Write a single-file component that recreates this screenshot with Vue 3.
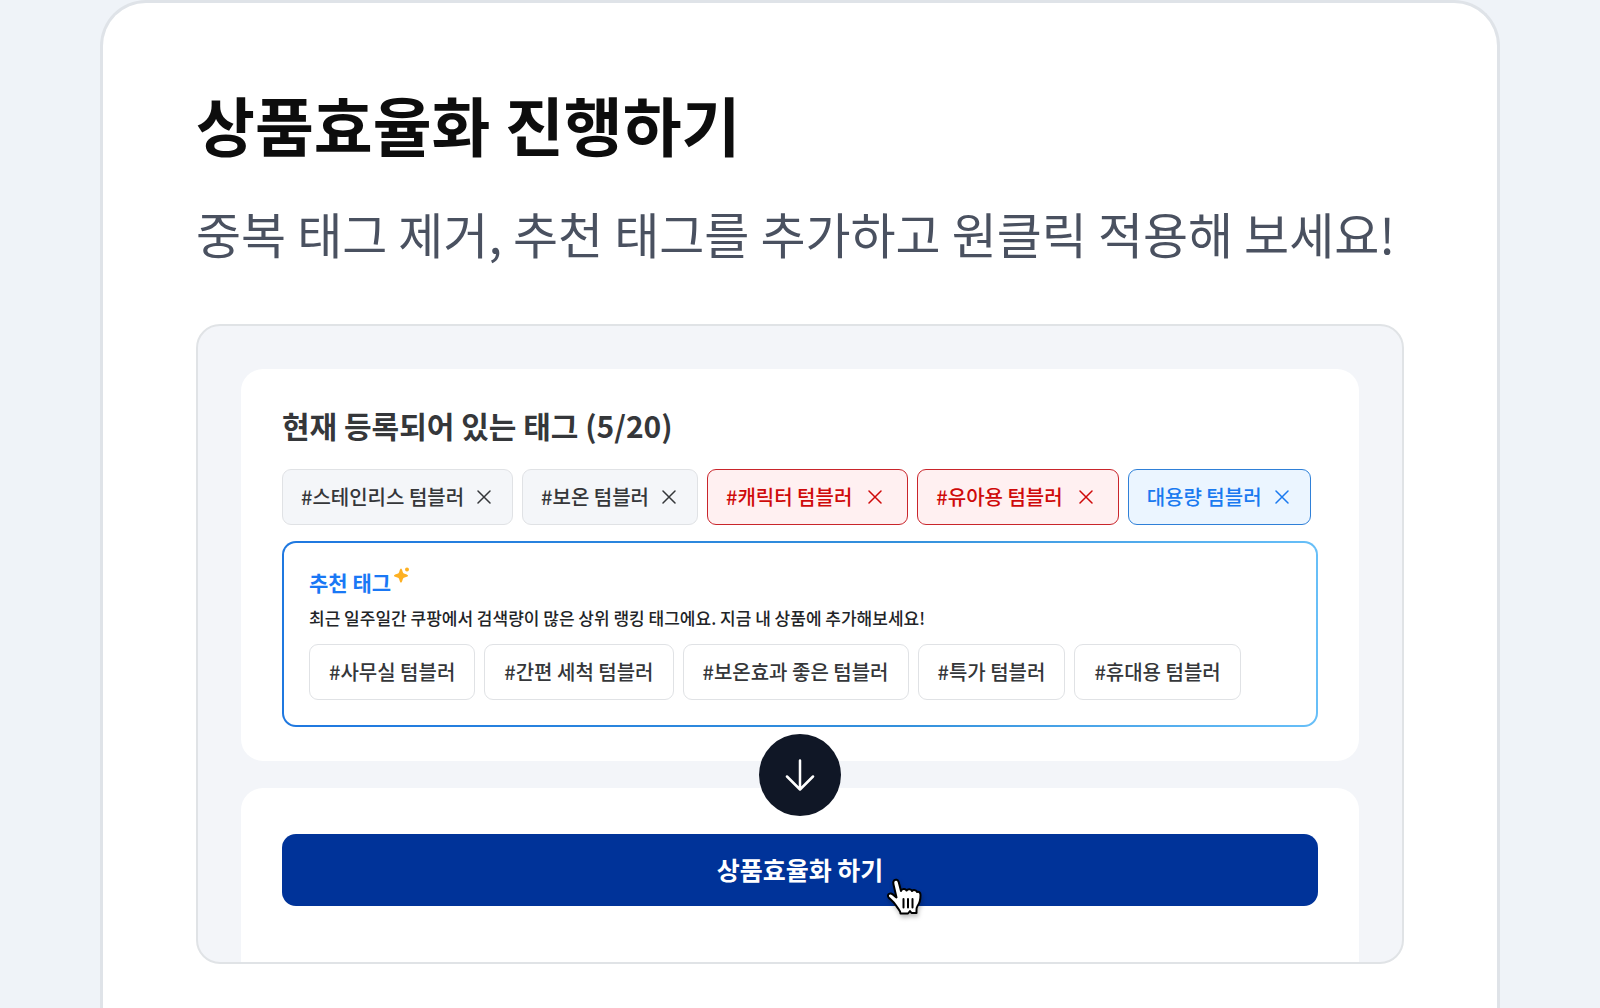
<template>
  <main class="page">
    <section class="sheet">
      <h1>상품효율화 진행하기</h1>
      <p class="lead">중복 태그 제거, 추천 태그를 추가하고 원클릭 적용해 보세요!</p>

      <div class="preview">
        <div class="panel tags-panel">
          <h2>현재 등록되어 있는 태그 (5/20)</h2>
          <ul class="tags">
            <li v-for="tag in tags" :key="tag.name" class="tag" :class="tag.type">
              <span>{{ tag.name }}</span>
              <button type="button" class="remove" :aria-label="`${tag.name} 삭제`" @click="removeTag(tag)">
                <svg viewBox="0 0 14 14" width="14" height="14">
                  <path d="M1 1L13 13M13 1L1 13" />
                </svg>
              </button>
            </li>
          </ul>

          <div class="recommend">
            <h3>
              추천 태그
              <svg class="sparkle" viewBox="0 0 16 16" width="16" height="16">
                <path d="M7 1.500C8.200 1.500 8.500 5.500 9.500 6.300C10.500 7.100 14 7.600 14 8.700C14 9.800 10.500 10.300 9.500 11.100C8.500 12 8.200 15.800 7 15.800C5.800 15.800 5.500 12 4.500 11.100C3.500 10.300 0 9.800 0 8.700C0 7.600 3.500 7.100 4.500 6.300C5.500 5.500 5.800 1.500 7 1.500Z" />
                <circle cx="13" cy="2.500" r="2" />
              </svg>
            </h3>
            <p>최근 일주일간 쿠팡에서 검색량이 많은 상위 랭킹 태그에요. 지금 내 상품에 추가해보세요!</p>
            <div class="tags">
              <button v-for="name in recommended" :key="name" type="button" class="tag plain">{{ name }}</button>
            </div>
          </div>

          <div class="arrow">
            <svg viewBox="0 0 32 32" width="32" height="32">
              <path d="M16 1.500V30M3 17.500L16 30.500L29 17.500" />
            </svg>
          </div>
        </div>

        <div class="panel action-panel">
          <button type="button" class="submit">
            <span class="submit-label">
              상품효율화 하기
              <svg class="cursor" viewBox="0 0 36 40" width="36" height="40">
                <path d="M8 3.500C9.500 2 12 2.500 12.700 5L15 14C16 11.500 19.500 11.500 20.500 13.500C22 11.700 25 12 26 14C27.500 12.500 30.500 13 31 15C33.500 14.300 34.500 16 34.500 18C34.500 24 33.500 26.500 31.500 29C30 31 30.500 33 30.500 36H25.500L24 34L22 36.500H14.500C14.500 33.500 12 32 10 28.500C8 25 5 23 2.500 20.500C1 18.500 2.500 16 5 16.500C7 17 8.500 19 10.500 20.500L7.500 7.500C7.100 5.800 7 4.500 8 3.500Z" />
                <path class="lines" d="M17.500 22V30.500M22 22V30.500M26.500 22V30.500" />
              </svg>
            </span>
          </button>
        </div>
      </div>
    </section>
  </main>
</template>

<script setup>
import { ref } from 'vue'

const tags = ref([
  { name: '#스테인리스 텀블러', type: 'normal' },
  { name: '#보온 텀블러', type: 'normal' },
  { name: '#캐릭터 텀블러', type: 'danger' },
  { name: '#유아용 텀블러', type: 'danger' },
  { name: '대용량 텀블러', type: 'info' }
])

const recommended = [
  '#사무실 텀블러',
  '#간편 세척 텀블러',
  '#보온효과 좋은 텀블러',
  '#특가 텀블러',
  '#휴대용 텀블러'
]

function removeTag(tag) {
  tags.value = tags.value.filter(t => t !== tag)
}
</script>

<style>
body {
  margin: 0;
  background: #eff3f8;
}
</style>

<style scoped>
* {
  box-sizing: border-box;
}

.page {
  padding: 0 100px;
  font-family: "Noto Sans CJK KR", sans-serif;
  color: #35373a;
}

h1, h2, h3, p, ul {
  margin: 0;
  padding: 0;
}

button {
  font: inherit;
  color: inherit;
  cursor: pointer;
}

.sheet {
  max-width: 1400px;
  min-height: 100vh;
  margin: 0 auto;
  padding: 72px 93px 44px;
  background: #fff;
  border: 3px solid #dfe3e8;
  border-bottom: 0;
  border-radius: 46px 46px 0 0;
}

h1 {
  font-size: 64px;
  line-height: 96px;
  font-weight: 700;
  color: #0d0d0d;
}

.lead {
  margin-top: 26px;
  font-size: 49px;
  line-height: 72px;
  font-weight: 400;
  color: #4a5160;
}

.preview {
  margin-top: 55px;
  padding: 43px 43px 0;
  overflow: hidden;
  background: #f3f5f9;
  border: 2px solid #e0e3e6;
  border-radius: 24px;
}

.panel {
  padding: 0 41px;
  background: #fff;
  border-radius: 22px;
}

.tags-panel {
  position: relative;
  padding-top: 34px;
  padding-bottom: 34px;
}

h2 {
  font-size: 30px;
  line-height: 44px;
  font-weight: 700;
}

.tags {
  display: flex;
  flex-wrap: wrap;
  gap: 9px;
  list-style: none;
}

h2 + .tags {
  margin-top: 22px;
}

.tag {
  display: flex;
  align-items: center;
  gap: 13px;
  height: 56px;
  padding: 0 21px 0 18px;
  border: 1px solid #e0e2e5;
  border-radius: 9px;
  font-size: 20px;
  line-height: 30px;
  font-weight: 500;
  white-space: nowrap;
}

.normal {
  background: #f4f6f9;
}

.danger {
  gap: 16px;
  padding-right: 25px;
  background: #fff0f1;
  border-color: #c9252b;
  color: #cf0a0a;
}

.info {
  background: #ebf5ff;
  border-color: #2f80d8;
  color: #1a7af0;
}

.plain {
  padding: 0 19px;
  background: #fff;
}

.remove {
  display: flex;
  padding: 0;
  background: none;
  border: 0;
}

.remove svg {
  fill: none;
  stroke: currentColor;
  stroke-width: 1.5;
  stroke-linecap: round;
}

.recommend {
  margin-top: 16px;
  padding: 24px 25px 25px;
  border: 2px solid transparent;
  border-radius: 14px;
  background:
    linear-gradient(#fff, #fff) padding-box,
    linear-gradient(90deg, #1f78e0, #3390dc 60%, #67bff8) border-box;
}

h3 {
  display: flex;
  gap: 3px;
  font-size: 21px;
  line-height: 30px;
  font-weight: 700;
  color: #1a78f5;
}

.sparkle {
  fill: #fdb022;
}

.recommend p {
  margin: 8px 0 13px;
  font-size: 17px;
  line-height: 26px;
  font-weight: 500;
  color: #222427;
}

/* sits across the gap between the two panels */
.arrow {
  position: absolute;
  left: 50%;
  bottom: -55px;
  display: flex;
  align-items: center;
  justify-content: center;
  width: 82px;
  height: 82px;
  border-radius: 50%;
  background: #101726;
  transform: translateX(-50%);
}

.arrow svg {
  fill: none;
  stroke: #fff;
  stroke-width: 2.5;
  stroke-linecap: round;
  stroke-linejoin: round;
}

.action-panel {
  margin-top: 27px;
  padding-top: 46px;
  padding-bottom: 56px;
  border-radius: 22px 22px 0 0;
}

.submit {
  display: block;
  width: 100%;
  height: 72px;
  padding: 0 0 2px;
  border: 0;
  border-radius: 14px;
  background: #003399;
  color: #fff;
  font-size: 25px;
  line-height: 36px;
  font-weight: 700;
}

.submit-label {
  position: relative;
}

.cursor {
  position: absolute;
  left: 100%;
  top: 26px;
  margin-left: 3px;
  fill: #fff;
  stroke: #000;
  stroke-width: 2;
  stroke-linejoin: round;
  filter: drop-shadow(1px 3px 2px rgba(0, 0, 0, 0.25));
}

.lines {
  stroke-linecap: round;
}
</style>
